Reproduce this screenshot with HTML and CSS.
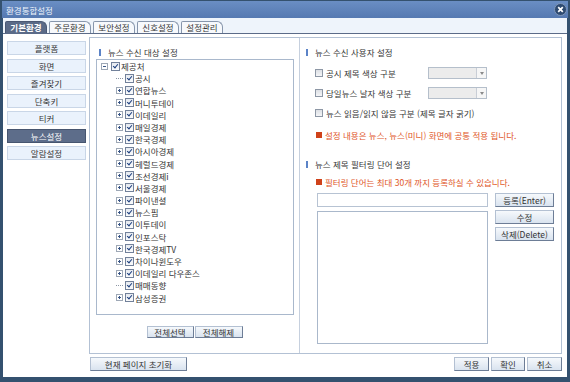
FILE: index.html
```html
<!DOCTYPE html>
<html lang="ko">
<head>
  <meta charset="UTF-8">
  <meta name="viewport" content="width=device-width, initial-scale=1.0">
  <title>환경통합설정</title>
  <link rel="stylesheet" href="styles.css">
</head>
<body>
<div class="window">
  <div class="titlebar">
    <span class="title">환경통합설정</span>
    <svg class="close" width="13" height="13" viewBox="0 0 13 13">
      <circle cx="6.5" cy="6.5" r="6" fill="#2e4b72" stroke="#8198ba"/>
      <path d="M4.2 4.2l4.6 4.6M8.8 4.2l-4.6 4.6" stroke="#fff" stroke-width="1.7"/>
    </svg>
  </div>

  <div class="client">
    <div class="tabs">
      <div class="tab active">기본환경</div>
      <div class="tab">주문환경</div>
      <div class="tab">보안설정</div>
      <div class="tab">신호설정</div>
      <div class="tab">설정관리</div>
    </div>

    <div class="body">
      <div class="menu">
        <div class="menu-item">플랫폼</div>
        <div class="menu-item">화면</div>
        <div class="menu-item">즐겨찾기</div>
        <div class="menu-item">단축키</div>
        <div class="menu-item">티커</div>
        <div class="menu-item active">뉴스설정</div>
        <div class="menu-item">알람설정</div>
      </div>

      <div class="content">
        <div class="panel">
          <div class="sec-left">
            <div class="heading">뉴스 수신 대상 설정</div>
            <ul class="tree">
              <li class="root"><span class="exp minus"></span><span class="chk on"></span>제공처</li>
              <li><span class="exp leaf"></span><span class="chk on"></span>공시</li>
              <li><span class="exp plus"></span><span class="chk on"></span>연합뉴스</li>
              <li><span class="exp plus"></span><span class="chk on"></span>머니투데이</li>
              <li><span class="exp plus"></span><span class="chk on"></span>이데일리</li>
              <li><span class="exp plus"></span><span class="chk on"></span>매일경제</li>
              <li><span class="exp plus"></span><span class="chk on"></span>한국경제</li>
              <li><span class="exp plus"></span><span class="chk on"></span>아시아경제</li>
              <li><span class="exp plus"></span><span class="chk on"></span>헤럴드경제</li>
              <li><span class="exp plus"></span><span class="chk on"></span>조선경제i</li>
              <li><span class="exp plus"></span><span class="chk on"></span>서울경제</li>
              <li><span class="exp plus"></span><span class="chk on"></span>파이낸셜</li>
              <li><span class="exp plus"></span><span class="chk on"></span>뉴스핌</li>
              <li><span class="exp plus"></span><span class="chk on"></span>이투데이</li>
              <li><span class="exp plus"></span><span class="chk on"></span>인포스탁</li>
              <li><span class="exp plus"></span><span class="chk on"></span>한국경제TV</li>
              <li><span class="exp plus"></span><span class="chk on"></span>차이나윈도우</li>
              <li><span class="exp plus"></span><span class="chk on"></span>이데일리 다우존스</li>
              <li><span class="exp leaf"></span><span class="chk on"></span>매매동향</li>
              <li><span class="exp plus"></span><span class="chk on"></span>삼성증권</li>
            </ul>
            <div class="btn-row">
              <button class="btn w47">전체선택</button>
              <button class="btn w48">전체해제</button>
            </div>
          </div>

          <div class="sec-right">
            <div class="heading">뉴스 수신 사용자 설정</div>
            <div class="opt-row first">
              <span class="chk"></span>
              <span class="opt-label">공시 제목 색상 구분</span>
              <div class="combo"><span class="arrow"></span></div>
            </div>
            <div class="opt-row">
              <span class="chk"></span>
              <span class="opt-label">당일뉴스 날자 색상 구분</span>
              <div class="combo"><span class="arrow"></span></div>
            </div>
            <div class="opt-row">
              <span class="chk"></span>
              <span>뉴스 읽음/읽지 않음 구분 (제목 글자 굵기)</span>
            </div>
            <div class="note first">설정 내용은 뉴스, 뉴스(미니) 화면에 공통 적용 됩니다.</div>

            <div class="heading second">뉴스 제목 필터링 단어 설정</div>
            <div class="note">필터링 단어는 최대 30개 까지 등록하실 수 있습니다.</div>
            <div class="filter">
              <div class="filter-main">
                <div class="input"></div>
                <div class="list"></div>
              </div>
              <div class="filter-btns">
                <button class="btn">등록(Enter)</button>
                <button class="btn">수정</button>
                <button class="btn">삭제(Delete)</button>
              </div>
            </div>
          </div>
        </div>

        <div class="footer">
          <button class="btn reset">현재 페이지 초기화</button>
          <div class="footer-right">
            <button class="btn w35">적용</button>
            <button class="btn w34">확인</button>
            <button class="btn w35">취소</button>
          </div>
        </div>
      </div>
    </div>
  </div>
</div>
</body>
</html>
```

FILE: styles.css
```css
* {
box-sizing: border-box;
}

html, body {
margin: 0;
padding: 0;
background-color: #34516f;
}

body {
font-family: "Noto Sans CJK KR", "Noto Sans", sans-serif;
font-size: 8.5px;
color: #363636;
}

.window {
width: 570px;
height: 382px;
padding: 1px 3px 5px 3px;
display: flex;
flex-direction: column;
background-color: #34516f;
}

.titlebar {
height: 17px;
margin: 0 -1px;
padding: 0 1px 0 4px;
display: flex;
align-items: center;
justify-content: space-between;
background: linear-gradient(#6a8ec4, #5579b1);
color: #eef3fb;
}

.client {
flex: 1;
display: flex;
flex-direction: column;
background-color: #eef4fb;
}

.tabs {
height: 16px;
padding: 3px 0 0 2px;
display: flex;
gap: 2px;
border-bottom: 1px solid #5b6b88;
}

.tab {
width: 42px;
height: 12px;
border: 1px solid #8796ac;
border-bottom: none;
border-radius: 2px 6px 0 0;
background-color: #f7f9fc;
text-align: center;
line-height: 11px;
}

.tab.active {
background-color: #5b6b88;
border-color: #4a5874;
color: #fff;
font-weight: bold;
}

.body {
flex: 1;
display: flex;
background-color: #fff;
}

.menu {
width: 84px;
padding: 7px 0 0 4px;
display: flex;
flex-direction: column;
gap: 3.5px;
}

.menu-item {
width: 79px;
height: 14px;
border: 1px solid #c9d6e7;
background-color: #eaf2fc;
text-align: center;
line-height: 12px;
}

.menu-item.active {
background-color: #5d6d8a;
border-color: #46556f;
color: #fff;
}

.content {
flex: 1;
display: flex;
flex-direction: column;
padding: 3px 5px 0 2px;
}

.panel {
height: 317px;
border: 1px solid #b3c1d4;
display: flex;
}

.sec-left {
width: 210px;
border-right: 1px solid #c6d0de;
}

.sec-right {
flex: 1;
}

.heading {
height: 10px;
line-height: 10px;
margin-top: 9px;
display: flex;
align-items: center;
gap: 7px;
}

.heading::before {
content: "";
width: 2px;
height: 7px;
background-color: #5b83c7;
}

.sec-left .heading {
padding-left: 9px;
}

.sec-right .heading {
padding-left: 6px;
}

.heading.second {
margin-top: 19px;
}

/* tree */
.tree {
list-style-type: none;
margin: 2px 0 0 6px;
padding: 0;
width: 198px;
height: 256px;
border: 1px solid #a9b8cc;
}

.tree li {
height: 12.2px;
line-height: 12.2px;
padding-left: 19px;
display: flex;
align-items: center;
white-space: nowrap;
}

.tree li.root {
padding-left: 4px;
}

.exp {
position: relative;
width: 7px;
height: 7px;
margin-right: 2px;
flex: none;
border: 1px solid #9ea8b6;
background-color: #fff;
}

.exp::before {
content: "";
position: absolute;
left: 1px;
top: 2px;
width: 3px;
height: 1px;
background-color: #3a5686;
}

.exp.plus::after {
content: "";
position: absolute;
left: 2px;
top: 1px;
width: 1px;
height: 3px;
background-color: #3a5686;
}

.exp.minus {
margin-right: 3px;
}

.exp.leaf {
height: 1px;
border: none;
border-top: 1px dotted #8c96a4;
background: none;
}

.exp.leaf::before {
display: none;
}

.chk {
position: relative;
width: 9px;
height: 9px;
margin-right: 1px;
flex: none;
border: 1px solid #72819a;
background: linear-gradient(#e6eaf0, #fafbfc);
}

.chk.on::after {
content: "";
position: absolute;
left: 2px;
top: 0;
width: 2px;
height: 4px;
border: solid #1b3d7d;
border-width: 0 1.5px 1.5px 0;
transform: rotate(40deg);
}

/* buttons */
.btn {
height: 14px;
padding: 0;
font-family: inherit;
font-size: 8.5px;
color: #333;
line-height: 12px;
border: 1px solid;
border-color: #b3c0d2 #6d7d96 #6d7d96 #b3c0d2;
background: linear-gradient(#f6f9fc, #d9e3ef);
}

.btn-row {
margin-top: 11px;
display: flex;
justify-content: center;
gap: 1px;
}

.btn-row .btn {
height: 12px;
line-height: 10px;
}

.w47 { width: 47px; }
.w48 { width: 48px; }
.w35 { width: 35px; }
.w34 { width: 34px; }

/* right options */
.opt-row {
height: 20px;
padding-left: 15px;
display: flex;
align-items: center;
}

.opt-row.first {
margin-top: 6px;
}

.opt-row .chk {
width: 8px;
height: 8px;
margin-right: 3px;
border-color: #8d97a5;
background: linear-gradient(#dcdfe4, #f4f5f7);
}

.opt-label {
width: 102px;
}

.combo {
width: 59px;
height: 12px;
display: flex;
justify-content: flex-end;
border: 1px solid #b5bfcb;
background-color: #ececec;
}

.combo .arrow {
width: 10px;
display: flex;
align-items: center;
justify-content: center;
border-left: 1px solid #c9ced6;
background-color: #f6f6f6;
}

.combo .arrow::after {
content: "";
border-left: 2.5px solid transparent;
border-right: 2.5px solid transparent;
border-top: 3px solid #8a8a8a;
}

.note {
height: 10px;
line-height: 10px;
margin-top: 8px;
padding-left: 16px;
display: flex;
align-items: center;
color: #e0561f;
}

.note.first {
margin-top: 7px;
}

.note::before {
content: "";
width: 6px;
height: 6px;
margin-right: 3px;
background-color: #cf421a;
}

.filter {
margin-top: 6px;
padding-left: 17px;
display: flex;
gap: 7px;
}

.filter-main {
width: 171px;
display: flex;
flex-direction: column;
gap: 4px;
}

.input {
height: 14px;
border: 1px solid #b7c3d3;
}

.list {
height: 133px;
border: 1px solid #aab8cb;
}

.filter-btns {
width: 59px;
display: flex;
flex-direction: column;
gap: 3px;
}

/* footer */
.footer {
flex: 1;
padding: 3px 0 0 1px;
display: flex;
justify-content: space-between;
align-items: flex-start;
}

.reset {
width: 97px;
}

.footer-right {
display: flex;
gap: 2px;
}
```
